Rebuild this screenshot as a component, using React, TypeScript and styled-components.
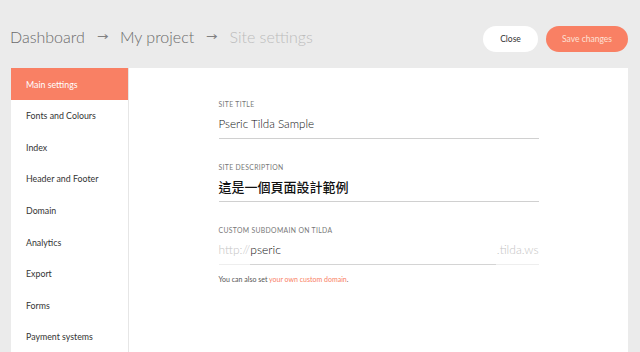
import React from "react";
import styled, { createGlobalStyle } from "styled-components";

const GlobalStyle = createGlobalStyle`
  body {
    margin: 0;
    background: #ebebeb;
    font-family: "Lato", "Noto Sans", "Noto Sans CJK TC", sans-serif;
  }
`;

const menu = [
  "Main settings",
  "Fonts and Colours",
  "Index",
  "Header and Footer",
  "Domain",
  "Analytics",
  "Export",
  "Forms",
  "Payment systems",
];

const App: React.FC = () => {
  return (
    <Page>
      <GlobalStyle />
      <Header>
        <Crumbs>
          <Crumb>Dashboard</Crumb>
          <Arrow>→</Arrow>
          <Crumb>My project</Crumb>
          <Arrow>→</Arrow>
          <Crumb $current>Site settings</Crumb>
        </Crumbs>
        <Actions>
          <Button>Close</Button>
          <Button $primary>Save changes</Button>
        </Actions>
      </Header>
      <Panel>
        <Sidebar>
          {menu.map((item, i) => (
            <MenuItem key={item} $active={i === 0}>
              {item}
            </MenuItem>
          ))}
        </Sidebar>
        <Main>
          <Form>
            <Field>
              <Label>Site title</Label>
              <Value>Pseric Tilda Sample</Value>
            </Field>
            <Field>
              <Label>Site description</Label>
              <Value $cjk>這是一個頁面設計範例</Value>
            </Field>
            <Field>
              <Label>Custom subdomain on Tilda</Label>
              <DomainRow>
                <Affix>http://</Affix>
                <DomainInput>pseric</DomainInput>
                <Affix>.tilda.ws</Affix>
              </DomainRow>
              <Help>
                You can also set <HelpLink>your own custom domain</HelpLink>.
              </Help>
            </Field>
          </Form>
        </Main>
      </Panel>
    </Page>
  );
};

const Page = styled.div`
  height: 352px;
  overflow: hidden;
`;

const Header = styled.div`
  height: 68px;
  padding: 0 12px 0 10px;
  box-sizing: border-box;
  display: flex;
  align-items: center;
  justify-content: space-between;
`;

const Crumbs = styled.div`
  display: flex;
  align-items: center;
  gap: 11px;
  margin-top: 5px;
`;

const Crumb = styled.span<{ $current?: boolean }>`
  font-size: 16px;
  font-weight: 300;
  color: ${(p) => (p.$current ? "#bcbcbc" : "#6a6a6a")};
`;

const Arrow = styled.span`
  font-size: 11px;
  color: #808080;
  font-family: "DejaVu Sans", sans-serif;
  transform: scaleX(1.25);
  margin: 0 2px;
`;

const Actions = styled.div`
  display: flex;
  gap: 8px;
  margin-top: 9px;
`;

const Button = styled.button<{ $primary?: boolean }>`
  height: 26px;
  width: ${(p) => (p.$primary ? "82px" : "55px")};
  padding: 0;
  border: none;
  border-radius: 13px;
  font-family: inherit;
  font-size: 8.5px;
  color: ${(p) => (p.$primary ? "#fde0d6" : "#333")};
  background: ${(p) => (p.$primary ? "#f98064" : "#fff")};
  cursor: pointer;
`;

const Panel = styled.div`
  margin: 0 12px 0 11px;
  display: flex;
  background: #fff;
  height: 284px;
`;

const Sidebar = styled.div`
  width: 117px;
  border-right: 1px solid #e6e6e6;
  display: flex;
  flex-direction: column;
  flex-shrink: 0;
`;

const MenuItem = styled.div<{ $active?: boolean }>`
  height: 32px;
  display: flex;
  align-items: center;
  padding: 1px 0 0 15px;
  box-sizing: border-box;
  font-size: 8.8px;
  color: ${(p) => (p.$active ? "#fff" : "#333")};
  background: ${(p) => (p.$active ? "#f98064" : "transparent")};
`;

const Main = styled.div`
  flex: 1;
  padding-top: 30px;
  display: flex;
  justify-content: center;
`;

const Form = styled.div`
  width: 320px;
  display: flex;
  flex-direction: column;
  gap: 22px;
`;

const Field = styled.div`
  display: flex;
  flex-direction: column;
`;

const Label = styled.div`
  height: 10px;
  line-height: 10px;
  margin: 1px 0 1px;
  font-size: 6.8px;
  letter-spacing: 0.35px;
  text-transform: uppercase;
  color: #777;
`;

const Value = styled.div<{ $cjk?: boolean }>`
  height: 28px;
  line-height: 28px;
  border-bottom: 1px solid #d0d0d0;
  font-family: ${(p) =>
    p.$cjk ? '"Noto Sans CJK TC", sans-serif' : "inherit"};
  font-size: ${(p) => (p.$cjk ? "13px" : "11.6px")};
  font-weight: ${(p) => (p.$cjk ? 500 : 300)};
  color: #111;
`;

const DomainRow = styled.div`
  display: flex;
  height: 28px;
  line-height: 28px;
  border-bottom: 1px solid #eeeeee;
  font-size: 12px;
  font-weight: 300;
`;

const Affix = styled.span`
  color: #c4c4c4;
`;

const DomainInput = styled.span`
  flex: 1;
  color: #111;
  border-bottom: 1px solid #d4d4d4;
  margin-bottom: -1px;
  margin-right: 1px;
`;

const Help = styled.div`
  margin-top: 10px;
  font-size: 7px;
  color: #555;
`;

const HelpLink = styled.span`
  color: #f98064;
`;

export default App;
